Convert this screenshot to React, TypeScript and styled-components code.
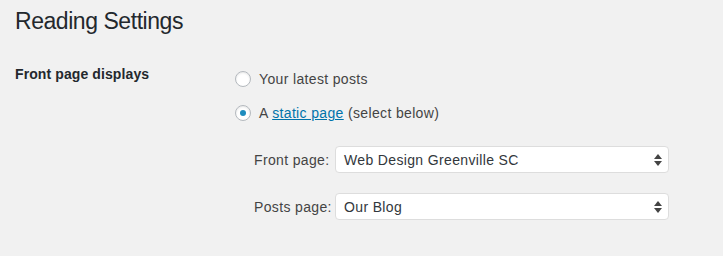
import React from "react";
import styled, { createGlobalStyle } from "styled-components";

const Global = createGlobalStyle`
  html, body { margin: 0; padding: 0; background: #f1f1f1; }
  body { font-family: "Liberation Sans", Arial, sans-serif; color: #23282d; }
`;

const Page = styled.div`
  padding: 0 0 0 15px;
  width: 723px;
  height: 256px;
  box-sizing: border-box;
  overflow: hidden;
`;

const Title = styled.h1`
  margin: 0;
  padding: 7px 0 0;
  font-size: 23px;
  font-weight: 400;
  line-height: 29px;
  letter-spacing: -0.45px;
  color: #23282d;
`;

const Row = styled.div`
  display: flex;
  margin-top: 29px;
`;

const Th = styled.div`
  width: 220px;
  flex: none;
  font-size: 14px;
  font-weight: 700;
  line-height: 18px;
  letter-spacing: 0.1px;
`;

const Td = styled.div`
  display: flex;
  flex-direction: column;
  padding-top: 5px;
`;

const RadioLine = styled.label`
  display: flex;
  align-items: center;
  gap: 8px;
  font-size: 14px;
  letter-spacing: 0.35px;
  height: 18px;
  margin-bottom: 16px;
  color: #444;
`;

const Radio = styled.span<{ $checked?: boolean }>`
  width: 16px;
  height: 16px;
  box-sizing: border-box;
  border-radius: 50%;
  border: 1px solid #b4b9be;
  background: #fff;
  box-shadow: inset 0 1px 2px rgba(0, 0, 0, 0.1);
  display: flex;
  align-items: center;
  justify-content: center;
  flex: none;
  &::after {
    content: "";
    display: ${(p) => (p.$checked ? "block" : "none")};
    width: 6px;
    height: 6px;
    border-radius: 50%;
    background: #1e8cbe;
  }
`;

const Link = styled.a`
  color: #0073aa;
  text-decoration: underline;
`;

const SelectList = styled.div`
  display: flex;
  flex-direction: column;
  gap: 20px;
  margin-left: 19px;
  margin-top: 8px;
`;

const SelectRow = styled.div`
  display: flex;
  align-items: center;
  font-size: 14px;
  letter-spacing: 0.35px;
  color: #444;
`;

const SelectLabel = styled.span`
  width: 81px;
  flex: none;
`;

const SelectBox = styled.div`
  width: 334px;
  height: 27px;
  box-sizing: border-box;
  border: 1px solid #ddd;
  border-radius: 4px;
  background: #fff;
  display: flex;
  align-items: center;
  justify-content: space-between;
  padding: 0 6px 0 8px;
  font-size: 14px;
  color: #32373c;
`;

const Arrows = () => (
  <svg width="8" height="12" viewBox="0 0 8 12">
    <path d="M4 0 L8 5 L0 5 Z" fill="#444" />
    <path d="M0 7 L8 7 L4 12 Z" fill="#444" />
  </svg>
);

export default function App() {
  return (
    <Page>
      <Global />
      <Title>Reading Settings</Title>
      <Row>
        <Th>Front page displays</Th>
        <Td>
          <RadioLine>
            <Radio />
            Your latest posts
          </RadioLine>
          <RadioLine>
            <Radio $checked />
            <span>
              A <Link href="#">static page</Link> (select below)
            </span>
          </RadioLine>
          <SelectList>
            <SelectRow>
              <SelectLabel>Front page:</SelectLabel>
              <SelectBox>
                Web Design Greenville SC
                <Arrows />
              </SelectBox>
            </SelectRow>
            <SelectRow>
              <SelectLabel>Posts page:</SelectLabel>
              <SelectBox>
                Our Blog
                <Arrows />
              </SelectBox>
            </SelectRow>
          </SelectList>
        </Td>
      </Row>
    </Page>
  );
}
